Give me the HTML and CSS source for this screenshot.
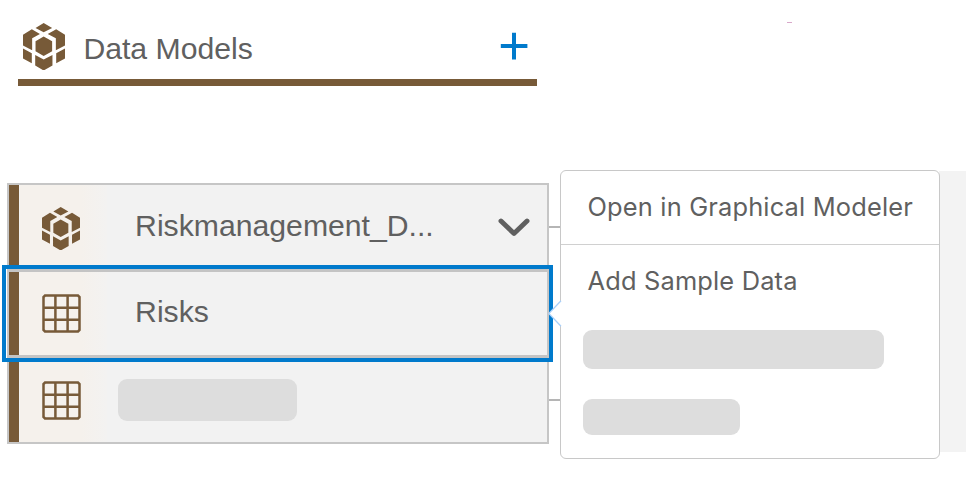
FILE: index.html
```
<!DOCTYPE html>
<html lang="en">
<head>
<meta charset="utf-8">
<title>Data Models</title>
<link rel="stylesheet" href="styles.css">
</head>
<body>
<svg class="defs" width="0" height="0">
  <symbol id="cube" viewBox="0 0 124 143" preserveAspectRatio="none">
    <path d="M61 0 86 15 61 28 37 15ZM26 19 50 33 27 46V82L0 68V35ZM98 19 124 35V68L97 82V46L73 33ZM61 41 86 55V85L61 99 37 85V55ZM0 77 26 91V121L0 107ZM124 77 98 91V121L124 107ZM36 96 61 110 87 96V128L61 143 36 128Z"/>
  </symbol>
  <symbol id="table" viewBox="0 0 39 39">
    <path fill="none" stroke="currentColor" stroke-width="2.5" d="M3 1.5H36L37.5 3V36L36 37.5H3L1.5 36V3ZM13.4 2V37M25.6 2V37M2 13.7H37M2 25.7H37"/>
  </symbol>
</svg>
<main class="page">
  <header class="heading">
    <svg class="heading-icon"><use href="#cube"/></svg>
    <h1>Data Models</h1>
    <svg class="add" viewBox="0 0 28 28"><path d="M14 .8V27.4M.8 14H27.4"/></svg>
  </header>
  <div class="canvas">
    <section class="models">
      <div class="row">
        <div class="type"><svg class="cube"><use href="#cube"/></svg></div>
        <span class="name">Riskmanagement_D...</span>
        <svg class="chevron" viewBox="0 0 32 20"><path d="M3 3 16 15.5 29 3"/></svg>
      </div>
      <div class="row selected">
        <div class="type"><svg class="table"><use href="#table"/></svg></div>
        <span class="name">Risks</span>
      </div>
      <div class="row">
        <div class="type"><svg class="table"><use href="#table"/></svg></div>
        <span class="placeholder model-placeholder"></span>
      </div>
    </section>
    <i class="connector first"></i>
    <i class="connector last"></i>
    <div class="backdrop"></div>
    <div class="menu">
      <svg class="arrow" viewBox="0 0 14 27"><path class="arrow-fill" d="M14 0 .5 13.5 14 27Z"/><path class="arrow-line" d="M13 .8.8 13.5 13 26.2"/></svg>
      <div class="item open"><span class="open-text">Open in Graphical Modeler</span></div>
      <div class="item sample"><span>Add Sample Data</span></div>
      <span class="placeholder long"></span>
      <span class="placeholder short"></span>
    </div>
  </div>
  <i class="speck"></i>
</main>
</body>
</html>
```
FILE: styles.css
```
* { box-sizing: border-box; }
body { margin: 0; background: #fff; color: #606060; font-family: "Liberation Sans", Arial, sans-serif; }
svg { display: block; flex: none; }
.defs { position: absolute; }
.page { position: relative; width: 966px; height: 484px; overflow: hidden; padding-top: 10px; }
.heading { display: flex; width: 519px; height: 76px; margin-left: 18px; padding: 0 9px 0 5px; border-bottom: 7px solid #775a38; }
.heading-icon { width: 42px; height: 47.5px; margin-top: 12.5px; fill: #775a38; }
h1 { margin: 21px 0 0 18.4px; font-size: 30.2px; line-height: 35px; font-weight: 400; white-space: nowrap; }
.add { width: 28px; height: 28px; margin: 21.7px 0 0 auto; fill: none; stroke: #007acc; stroke-width: 4; }
.canvas { position: relative; height: 398px; padding: 97px 0 0 7px; }
.models { width: 542px; border: 2px solid #c6c6c6; background: #f2f2f2; }
.row { display: flex; align-items: center; height: 84px; background: linear-gradient(90deg, #775a38 10.5px, transparent 10.5px); padding-left: 10.5px; }
.row.selected { position: relative; height: 89px; border-top: 3px solid #c4c4c4; border-bottom: 3px solid #c4c4c4; }
.selected::after { content: ""; position: absolute; top: -7px; bottom: -7px; left: -7px; right: -6px; border: 4.5px solid #007acc; }
.type { align-self: stretch; display: flex; align-items: center; width: 87px; padding-left: 22.4px; flex: none; color: #775a38; background: linear-gradient(90deg, #f5f1ec 70%, #f3f2f1); }
.cube { width: 38px; height: 43.5px; margin-top: 3px; fill: #775a38; }
.table { width: 39px; height: 39px; }
.name { margin: -3px 0 0 28.6px; font-size: 30.2px; line-height: 36px; white-space: nowrap; }
.selected .name { margin-top: -4px; }
.chevron { width: 32px; height: 20px; margin: 1px 17px 0 auto; fill: none; stroke: #606060; stroke-width: 4.9; stroke-linecap: round; stroke-linejoin: round; }
.placeholder { display: block; background: #ddd; border-radius: 9px; }
.model-placeholder { width: 179px; height: 42px; margin-left: 11.5px; }
.connector { position: absolute; left: 549px; width: 12px; height: 2px; background: #b5b5b5; }
.first { top: 140px; }
.last { top: 313px; }
.backdrop { position: absolute; left: 939px; top: 85px; width: 27px; height: 281px; background: #f3f3f3; }
.menu { position: absolute; left: 560px; top: 84px; width: 380px; height: 289px; border: 1px solid #c8c8c8; border-radius: 6px; background: #fff; }
.item { font-family: Inter, sans-serif; font-size: 25.4px; line-height: 34px; letter-spacing: .18px; padding-left: 26.5px; white-space: nowrap; }
.open { height: 74px; padding-top: 19px; border-bottom: 1.5px solid #d0d0d0; }
.sample { height: 85px; padding-top: 19px; }
.long { width: 301px; height: 39px; margin-left: 22px; }
.short { width: 157px; height: 36px; margin: 30px 0 0 22px; }
.arrow { position: absolute; left: -13px; top: 129px; width: 14px; height: 27px; }
.arrow-fill { fill: #fff; }
.arrow-line { fill: none; stroke: #a8d0fa; stroke-width: 1.3; }
.speck { position: absolute; left: 787px; top: 22px; width: 5px; height: 1px; background: #d9a9ca; }
```
